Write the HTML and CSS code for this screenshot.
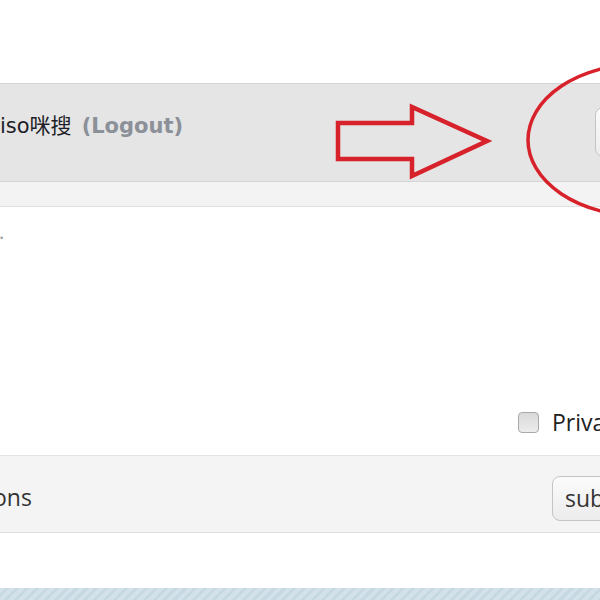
FILE: index.html
```html
<!DOCTYPE html>
<html>
<head>
<meta charset="utf-8">
<link rel="stylesheet" href="styles.css">
</head>
<body>
<div class="page">
  <div class="top-space"></div>
  <div class="userbar">
    <div class="user"><span class="name">iso咪搜</span><span class="logout">(Logout)</span></div>
    <div class="btn btn-top"></div>
  </div>
  <div class="strip"></div>
  <div class="content">
    <div class="cut">.</div>
    <label class="privacy"><span class="check"></span><span class="privtext">Private</span></label>
  </div>
  <div class="optrow">
    <div class="optlabel">ons</div>
    <div class="btn btn-sub">submit</div>
  </div>
  <div class="bottom-space"></div>
  <div class="stripes"></div>

  <svg class="annot" width="600" height="600" viewBox="0 0 600 600">
    <path d="M338 123 L412 123 L412 107 L487 141 L412 176 L412 159 L338 159 Z" fill="none" stroke="#d8222b" stroke-width="4.5" stroke-linejoin="miter"/>
    <ellipse cx="641" cy="140" rx="113" ry="76" fill="none" stroke="#d8222b" stroke-width="3.5"/>
  </svg>
</div>
</body>
</html>
```
FILE: styles.css
```css
html, body {
  margin: 0;
  padding: 0;
  background: #ffffff;
}
.page {
  position: relative;
  width: 600px;
  height: 600px;
  overflow: hidden;
  display: flex;
  flex-direction: column;
  font-family: "Open Sans", "Noto Sans", sans-serif;
  color: #333;
}
.top-space {
  height: 83px;
  flex: none;
}
.userbar {
  flex: none;
  height: 97px;
  background: #e5e5e5;
  border-top: 1px solid #d4d4d4;
  border-bottom: 1px solid #d6d6d6;
  display: flex;
  justify-content: space-between;
  align-items: flex-start;
}
.user {
  padding-top: 30px;
  font-family: "DejaVu Sans", "Noto Sans CJK SC", sans-serif;
  font-size: 21px;
  line-height: 25px;
  white-space: nowrap;
}
.name {
  color: #1e1e28;
}
.logout {
  margin-left: 10px;
  font-weight: bold;
  color: #8b9099;
}
.btn {
  flex: none;
  box-sizing: border-box;
  border: 1px solid #c4c4c4;
  border-radius: 8px;
  background: linear-gradient(#fbfbfb, #ececec);
  white-space: nowrap;
}
.btn-top {
  margin-top: 23px;
  margin-right: -80px;
  width: 85px;
  height: 50px;
}
.strip {
  flex: none;
  height: 24px;
  background: #f3f3f3;
  border-bottom: 1px solid #e0e0e0;
}
.content {
  flex: none;
  height: 248px;
  display: flex;
  flex-direction: column;
  justify-content: space-between;
}
.cut {
  margin-top: 13px;
  margin-left: -1px;
  font-size: 20px;
  line-height: 24px;
  color: #999;
}
.privacy {
  display: flex;
  align-items: center;
  gap: 13px;
  padding-left: 518px;
  margin-bottom: 20px;
  white-space: nowrap;
}
.check {
  flex: none;
  box-sizing: border-box;
  width: 21px;
  height: 21px;
  border: 1px solid #a9a9a9;
  border-radius: 4px;
  background: linear-gradient(#d9d9d9, #ececec);
}
.privtext {
  font-size: 23px;
  line-height: 26px;
  color: #222;
}
.optrow {
  flex: none;
  height: 76px;
  background: #f4f4f4;
  border-top: 1px solid #e3e3e3;
  border-bottom: 1px solid #dedede;
  display: flex;
  justify-content: space-between;
  align-items: flex-start;
}
.optlabel {
  margin-top: 26px;
  margin-left: -7px;
  font-size: 23px;
  line-height: 30px;
  color: #333;
}
.btn-sub {
  margin-top: 20px;
  margin-right: -60px;
  height: 45px;
  width: 108px;
  padding-left: 12px;
  font-size: 23px;
  line-height: 42px;
  color: #333;
}
.bottom-space {
  flex: 1;
}
.stripes {
  flex: none;
  height: 12px;
  background-color: #d3e2ea;
  background-image: repeating-linear-gradient(135deg, #d3e2ea 0 4px, #c6d8e2 4px 7px);
}
.annot {
  position: absolute;
  left: 0;
  top: 0;
  pointer-events: none;
}
```
